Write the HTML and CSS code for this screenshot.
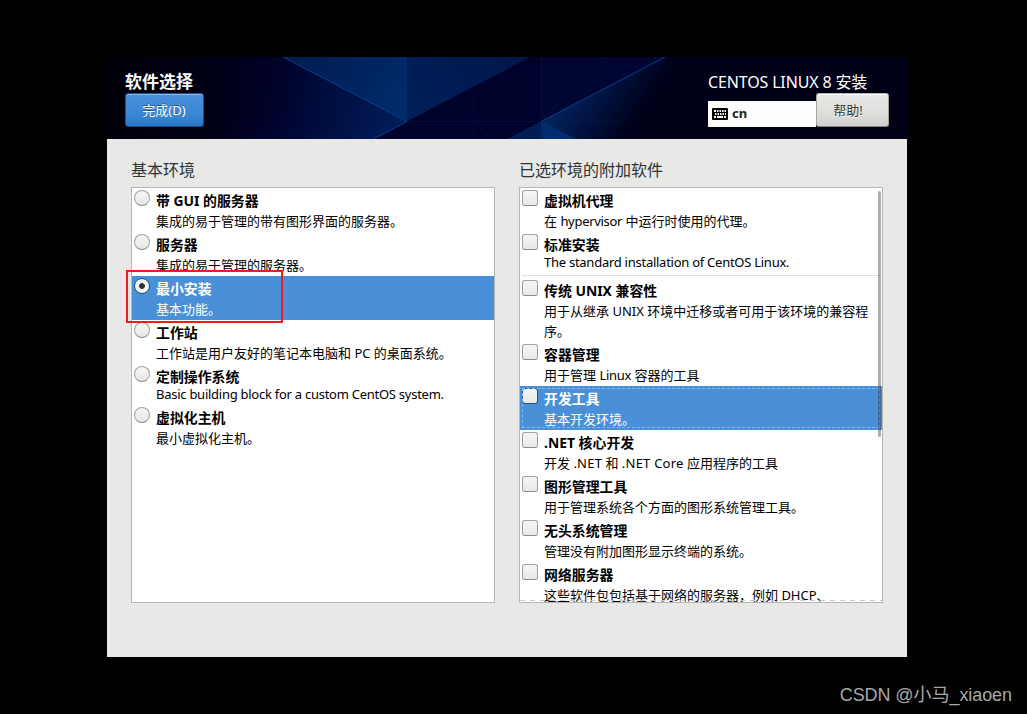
FILE: index.html
```html
<!DOCTYPE html>
<html lang="zh-CN">
<head>
<meta charset="utf-8">
<title>软件选择</title>
<link rel="stylesheet" href="styles.css">
</head>
<body>
<div class="window">
  <header class="header">
    <svg class="backdrop" width="800" height="82" viewBox="0 0 800 82" aria-hidden="true">
      <defs>
        <linearGradient id="base" x1="0" x2="1" y1="0" y2="0">
          <stop offset="0" stop-color="#00000a"/><stop offset=".12" stop-color="#000014"/><stop offset=".16" stop-color="#00001e"/><stop offset=".25" stop-color="#000026"/>
          <stop offset=".6" stop-color="#000331"/><stop offset=".77" stop-color="#000019"/><stop offset="1" stop-color="#000017"/>
        </linearGradient>
        <linearGradient id="left" gradientUnits="userSpaceOnUse" x1="130" x2="290" y1="30" y2="70">
          <stop offset="0" stop-color="#000026" stop-opacity="0"/><stop offset=".45" stop-color="#000a3a"/><stop offset="1" stop-color="#001c57"/>
        </linearGradient>
        <linearGradient id="bright" x1="0" x2="1" y1="0" y2=".4">
          <stop offset="0" stop-color="#001b50"/><stop offset="1" stop-color="#002a68"/>
        </linearGradient>
        <linearGradient id="mid" gradientUnits="userSpaceOnUse" x1="300" y1="60" x2="420" y2="0">
          <stop offset="0" stop-color="#001f58"/><stop offset="1" stop-color="#00174c"/>
        </linearGradient>
        <linearGradient id="right" gradientUnits="userSpaceOnUse" x1="465" y1="30" x2="525" y2="70">
          <stop offset="0" stop-color="#002259"/><stop offset=".4" stop-color="#001442"/><stop offset="1" stop-color="#000019"/>
        </linearGradient>
      </defs>
      <path d="M0 0H800V82H0Z" fill="url(#base)"/>
      <path d="M100 0H176L300 64.500L267 82H100Z" fill="url(#left)"/>
      <path d="M176 0H300V64.500Z" fill="url(#bright)"/>
      <path d="M300 0H424L300 64.500Z" fill="url(#mid)"/>
      <path d="M424 0L300 64.500L267 82H434V0Z" fill="#00022b"/>
      <path d="M434 0H558L434 64.500Z" fill="#000532"/>
      <path d="M558 0H690L600 82H468L434 64.500Z" fill="url(#right)"/>
      <path d="M434 64.500L400 82H434Z" fill="#001d56"/>
      <path d="M434 64.500V82H468Z" fill="#002b70"/>
      <path d="M176 0L300 64.500L267 82M558 0L434 64.500" fill="none" stroke="#05408e" stroke-width="1"/>
      <path d="M434 64.500L468 82" fill="none" stroke="#06306a"/>
      <path d="M300 64.500H515M367 40V82M367 64.500L400 31M367 64.500L384 82M300 64.500L317 82M434 0V64M434 64L500 0" fill="none" stroke="#062455" opacity=".35"/>
    </svg>
    <div class="header-left">
      <h1 class="title">软件选择</h1>
      <button class="button done">完成(D)</button>
    </div>
    <div class="header-right">
      <div class="product">CENTOS LINUX 8 安装</div>
      <div class="controls">
        <div class="layout">
          <svg width="16" height="12" viewBox="0 0 16 12" aria-hidden="true">
            <rect width="16" height="12" rx="1" fill="#000"/>
            <path d="M2 3h2M5 3h1.500M7.500 3H9M10 3h1.500M12.500 3H14M3 6h1.500M5.500 6H7M8 6h1.500M10.500 6H12M13 6h1M2 9h2M5 9h6M12 9h2" stroke="#fff" stroke-width="1.900"/>
          </svg>
          <span>cn</span>
        </div>
        <button class="button help">帮助!</button>
      </div>
    </div>
  </header>
  <main class="content">
    <section class="panel">
      <h2 class="heading">基本环境</h2>
      <div class="list">
        <div class="row"><i class="radio"></i><div class="text"><b>带 GUI 的服务器</b><p>集成的易于管理的带有图形界面的服务器。</p></div></div>
        <div class="row"><i class="radio"></i><div class="text"><b>服务器</b><p>集成的易于管理的服务器。</p></div></div>
        <div class="row selected"><i class="radio checked"></i><div class="text"><b>最小安装</b><p>基本功能。</p></div></div>
        <div class="row"><i class="radio"></i><div class="text"><b>工作站</b><p>工作站是用户友好的笔记本电脑和 PC 的桌面系统。</p></div></div>
        <div class="row"><i class="radio"></i><div class="text"><b>定制操作系统</b><p class="latin">Basic building block for a custom CentOS system.</p></div></div>
        <div class="row"><i class="radio"></i><div class="text"><b>虚拟化主机</b><p>最小虚拟化主机。</p></div></div>
      </div>
      <div class="marker"></div>
    </section>
    <section class="panel">
      <h2 class="heading">已选环境的附加软件</h2>
      <div class="list addons">
        <div class="row"><i class="check"></i><div class="text"><b>虚拟机代理</b><p>在 <span class="tight">hypervisor</span> 中运行时使用的代理。</p></div></div>
        <div class="row"><i class="check"></i><div class="text"><b>标准安装</b><p class="latin">The standard installation of CentOS Linux.</p></div></div>
        <div class="separator"></div>
        <div class="row"><i class="check"></i><div class="text"><b>传统 UNIX 兼容性</b><p>用于从继承 UNIX 环境中迁移或者可用于该环境的兼容程<br>序。</p></div></div>
        <div class="row"><i class="check"></i><div class="text"><b>容器管理</b><p>用于管理 <span class="tight">Linux</span> 容器的工具</p></div></div>
        <div class="row selected focused"><i class="check"></i><div class="text"><b>开发工具</b><p>基本开发环境。</p></div></div>
        <div class="row"><i class="check"></i><div class="text"><b>.NET 核心开发</b><p>开发 <span class="loose">.NET</span> 和 <span class="loose">.NET Core</span> 应用程序的工具</p></div></div>
        <div class="row"><i class="check"></i><div class="text"><b>图形管理工具</b><p>用于管理系统各个方面的图形系统管理工具。</p></div></div>
        <div class="row"><i class="check"></i><div class="text"><b>无头系统管理</b><p>管理没有附加图形显示终端的系统。</p></div></div>
        <div class="row"><i class="check"></i><div class="text"><b>网络服务器</b><p>这些软件包包括基于网络的服务器，例如 DHCP、</p></div></div>
        <div class="scrollbar"></div>
        <div class="overflow-edge"></div>
      </div>
    </section>
  </main>
</div>
<div class="watermark">CSDN @小马_xiaoen</div>
</body>
</html>
```
FILE: styles.css
```css
* { box-sizing: border-box; }
body {
  margin: 0;
  width: 1027px;
  height: 714px;
  padding: 57px 0 0 107px;
  overflow: hidden;
  background: #000;
  color: #000;
  font: 13px/20px "Noto Sans", "Noto Sans CJK SC", sans-serif;
}
h1, h2, p { margin: 0; font-weight: 400; }
.window { width: 800px; height: 600px; background: #e8e8e6; }
.header {
  position: relative;
  display: flex;
  justify-content: space-between;
  height: 82px;
  padding: 15px 18px 0;
  overflow: hidden;
  color: #fff;
}
.backdrop { position: absolute; inset: 0; }
.header-left, .header-right { position: relative; }
.title { height: 21px; font-size: 17px; line-height: 20px; font-weight: 700; }
.button {
  display: block;
  height: 34px;
  padding: 0;
  border: 1px solid;
  border-radius: 3px;
  font: 13px/32px "Noto Sans", "Noto Sans CJK SC", sans-serif;
}
.done {
  width: 79px;
  padding-right: 1px;
  border-color: #1c5187;
  background: linear-gradient(#4a90d9, #3c87d6 65%, #2a76c6);
  box-shadow: inset 0 1px #8bb9e9;
  color: #fff;
  text-shadow: 0 -1px #235a91;
}
.help {
  width: 73px;
  padding-right: 9px;
  border-color: #b5b5ae #a5a59e #83837b;
  background: linear-gradient(#e8e8e6, #dededc 60%, #cfcfca);
  box-shadow: inset 0 1px #fff;
  color: #2e3436;
  text-shadow: 0 1px #fff;
}
.header-right { width: 181px; }
.product { height: 21px; font-size: 16px; line-height: 20px; letter-spacing: -.15px; white-space: nowrap; }
.controls { display: flex; align-items: flex-end; }
.layout {
  display: flex;
  align-items: center;
  gap: 4px;
  width: 108px;
  height: 26px;
  padding-left: 4px;
  background: #fdfdfd;
  color: #1c1f20;
  font-weight: 700;
}
.layout span { line-height: 18px; padding-bottom: 2px; }
.content { display: flex; gap: 24px; padding: 20px 24px 0; }
.panel { position: relative; width: 364px; }
.heading { height: 28px; color: #2e3436; font-size: 16px; line-height: 23px; }
.list { position: relative; height: 416px; overflow: hidden; border: 1px solid #b6b6b3; background: #fff; }
.row { position: relative; display: flex; gap: 6px; padding: 2px 2px 1px; }
.text { padding-top: 1px; white-space: nowrap; }
.text b { display: block; height: 20px; font-size: 13.9px; line-height: 19px; }
.text .latin { height: 17px; line-height: 14px; letter-spacing: -.26px; }
.tight { letter-spacing: -.3px; }
.loose { letter-spacing: .22px; }
.radio, .check {
  flex: none;
  width: 16px;
  height: 16px;
  border: 1px solid #a1a19d;
  border-bottom-color: #8c8c87;
  border-radius: 3px;
  background: linear-gradient(#f6f6f5, #e7e7e5);
}
.radio { border-radius: 50%; }
.checked { border-color: #1c5187; background: radial-gradient(circle, #2e3436 0 2.5px, #f3f3f2 3.3px); }
.selected { background: #4a90d9; color: #fff; }
.focused .check { border-color: #1c5187; }
.focused::after { content: ""; position: absolute; inset: 2px; border: 1px dashed #86b5e6; }
.separator { height: 1px; margin: 2px 2px; background: #e0e0de; }
.scrollbar { position: absolute; top: 3px; right: 1px; width: 3px; height: 246px; border-radius: 2px; background: rgba(46, 52, 54, .4); }
.overflow-edge {
  position: absolute;
  left: 0;
  right: 0;
  bottom: 1px;
  height: 1px;
  background: repeating-linear-gradient(90deg, #c9c9c7 0 5px, transparent 5px 10px);
}
.marker { position: absolute; left: -5px; top: 111px; width: 157px; height: 53px; border: 2px solid #ed1c24; }
.watermark {
  position: absolute;
  right: 15px;
  bottom: 7px;
  color: #a8a8a8;
  font: 18px/24px "Liberation Sans", "Noto Sans CJK SC", sans-serif;
  letter-spacing: -.07px;
}
```
